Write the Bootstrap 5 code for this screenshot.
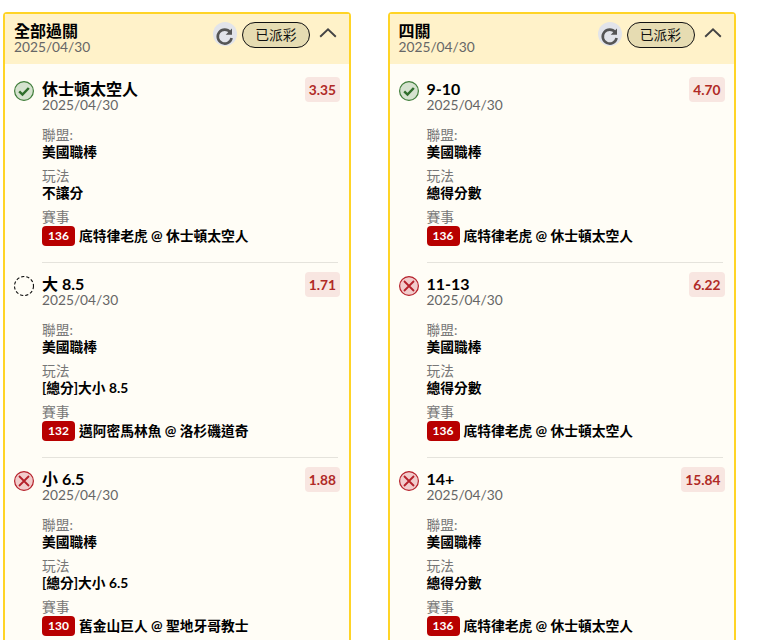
<!DOCTYPE html>
<html lang="zh-Hant">
<head>
<meta charset="utf-8">
<title>過關</title>
<link href="https://cdn.jsdelivr.net/npm/bootstrap@5.3.0/dist/css/bootstrap.min.css" rel="stylesheet">
<style>
html, body { height: 640px; overflow: hidden; background: #fff; }
body { font-family: Lato, "Noto Sans CJK TC", sans-serif; color: #000; }
.slip-page { padding: 12px 0 0 3px; gap: 36.5px; }
.slip-card { width: 348px; flex: none; border: 2px solid #ffd426; border-radius: 4px; background: #fffdf6; padding-bottom: 40px; }
.slip-head { height: 50px; background: #fff2c9; padding: 7px 12px 0 9px; }
.slip-title { font-size: 16px; font-weight: 700; line-height: 19px; }
.slip-date { font-size: 13.76px; color: #666; line-height: 14px; }
.slip-refresh { width: 24px; height: 24px; border-radius: 50%; background: #e2e4ea; margin-top: 1px; }
.slip-pill { height: 26px; width: 68px; border: 1px solid #111; border-radius: 13px; background: #e6dcb2; font-size: 13.76px; line-height: 24px; color: #111; margin: 1px 9px 0 5px; }
.slip-item { padding: 9px 9px 0 9px; }
.slip-head + .slip-item { padding-top: 13px; }
.slip-icon { width: 20px; height: 20px; margin-top: 4px; flex: none; }
.slip-body { margin-left: 8px; min-width: 0; }
.slip-name { font-size: 16px; font-weight: 700; line-height: 18px; margin-top: 3px; }
.slip-odds { height: 25px; padding: 0 4px; min-width: 35px; border-radius: 4px; background: #f8e6e1; color: #b02a26; font-size: 13.76px; font-weight: 700; line-height: 25px; text-align: center; }
.slip-label { font-size: 13.76px; line-height: 17px; color: #777; }
.slip-val { font-size: 13.76px; font-weight: 700; line-height: 17px; margin-bottom: 7px; }
.slip-group { margin-top: 14px; margin-left: 28px; }
.slip-rule { margin: 16px 2px 0 28px; border-top: 1px solid #e5e3dc; }
.slip-match { font-size: 13.76px; font-weight: 700; line-height: 20px; margin-top: 1px; }
.slip-num { width: 33px; height: 20px; border-radius: 4px; background: #b80000; color: #fff; font-size: 12px; font-weight: 700; line-height: 20px; text-align: center; margin-right: 4px; flex: none; }
</style>
</head>
<body>
<svg width="0" height="0" class="d-block" aria-hidden="true">
  <symbol id="i-win" viewBox="0 0 20 20"><circle cx="10" cy="10" r="9.4" fill="#d5e2cf" stroke="#3f7d3a" stroke-width="1.2"/><path d="M5.2 10.4l3.3 3.2 6.3-6.6" fill="none" stroke="#2f6e2c" stroke-width="2.5"/></symbol>
  <symbol id="i-lose" viewBox="0 0 20 20"><circle cx="10" cy="10" r="9.4" fill="#f2cccc" stroke="#b5202a" stroke-width="1.2"/><path d="M5 5l10 10M15 5L5 15" fill="none" stroke="#b5202a" stroke-width="1.8"/></symbol>
  <symbol id="i-open" viewBox="0 0 20 20"><circle cx="10" cy="10" r="9.5" fill="none" stroke="#111" stroke-width="1.1" stroke-dasharray="3.2 2"/></symbol>
  <symbol id="i-ref" viewBox="0 0 24 24"><path d="M17.2 8.2A7 7 0 1 0 18.6 14" fill="none" stroke="#555" stroke-width="2.6"/><path d="M19 4.5v6.3h-6.3z" fill="#555"/></symbol>
  <symbol id="i-chev" viewBox="0 0 18 24"><path d="M1.2 15.8L9 8.4l7.8 7.4" fill="none" stroke="#444" stroke-width="1.9"/></symbol>
</svg>
<div class="slip-page d-flex align-items-start">

<div class="slip-card">
  <div class="slip-head d-flex justify-content-between">
    <div><div class="slip-title">全部過關</div><div class="slip-date">2025/04/30</div></div>
    <div class="d-flex align-items-start">
      <div class="slip-refresh"><svg width="24" height="24"><use href="#i-ref"/></svg></div>
      <div class="slip-pill text-center">已派彩</div>
      <svg width="18" height="24"><use href="#i-chev"/></svg>
    </div>
  </div>

  <div class="slip-item">
    <div class="d-flex">
      <svg class="slip-icon"><use href="#i-win"/></svg>
      <div class="slip-body flex-grow-1"><div class="slip-name">休士頓太空人</div><div class="slip-date">2025/04/30</div></div>
      <div class="slip-odds">3.35</div>
    </div>
    <div class="slip-group">
      <div class="slip-label">聯盟:</div><div class="slip-val">美國職棒</div>
      <div class="slip-label">玩法</div><div class="slip-val">不讓分</div>
      <div class="slip-label">賽事</div>
      <div class="slip-match d-flex"><span class="slip-num">136</span>底特律老虎 @ 休士頓太空人</div>
    </div>
    <div class="slip-rule"></div>
  </div>

  <div class="slip-item">
    <div class="d-flex">
      <svg class="slip-icon"><use href="#i-open"/></svg>
      <div class="slip-body flex-grow-1"><div class="slip-name">大 8.5</div><div class="slip-date">2025/04/30</div></div>
      <div class="slip-odds">1.71</div>
    </div>
    <div class="slip-group">
      <div class="slip-label">聯盟:</div><div class="slip-val">美國職棒</div>
      <div class="slip-label">玩法</div><div class="slip-val">[總分]大小 8.5</div>
      <div class="slip-label">賽事</div>
      <div class="slip-match d-flex"><span class="slip-num">132</span>邁阿密馬林魚 @ 洛杉磯道奇</div>
    </div>
    <div class="slip-rule"></div>
  </div>

  <div class="slip-item">
    <div class="d-flex">
      <svg class="slip-icon"><use href="#i-lose"/></svg>
      <div class="slip-body flex-grow-1"><div class="slip-name">小 6.5</div><div class="slip-date">2025/04/30</div></div>
      <div class="slip-odds">1.88</div>
    </div>
    <div class="slip-group">
      <div class="slip-label">聯盟:</div><div class="slip-val">美國職棒</div>
      <div class="slip-label">玩法</div><div class="slip-val">[總分]大小 6.5</div>
      <div class="slip-label">賽事</div>
      <div class="slip-match d-flex"><span class="slip-num">130</span>舊金山巨人 @ 聖地牙哥教士</div>
    </div>
  </div>
</div>

<div class="slip-card">
  <div class="slip-head d-flex justify-content-between">
    <div><div class="slip-title">四關</div><div class="slip-date">2025/04/30</div></div>
    <div class="d-flex align-items-start">
      <div class="slip-refresh"><svg width="24" height="24"><use href="#i-ref"/></svg></div>
      <div class="slip-pill text-center">已派彩</div>
      <svg width="18" height="24"><use href="#i-chev"/></svg>
    </div>
  </div>

  <div class="slip-item">
    <div class="d-flex">
      <svg class="slip-icon"><use href="#i-win"/></svg>
      <div class="slip-body flex-grow-1"><div class="slip-name">9-10</div><div class="slip-date">2025/04/30</div></div>
      <div class="slip-odds">4.70</div>
    </div>
    <div class="slip-group">
      <div class="slip-label">聯盟:</div><div class="slip-val">美國職棒</div>
      <div class="slip-label">玩法</div><div class="slip-val">總得分數</div>
      <div class="slip-label">賽事</div>
      <div class="slip-match d-flex"><span class="slip-num">136</span>底特律老虎 @ 休士頓太空人</div>
    </div>
    <div class="slip-rule"></div>
  </div>

  <div class="slip-item">
    <div class="d-flex">
      <svg class="slip-icon"><use href="#i-lose"/></svg>
      <div class="slip-body flex-grow-1"><div class="slip-name">11-13</div><div class="slip-date">2025/04/30</div></div>
      <div class="slip-odds">6.22</div>
    </div>
    <div class="slip-group">
      <div class="slip-label">聯盟:</div><div class="slip-val">美國職棒</div>
      <div class="slip-label">玩法</div><div class="slip-val">總得分數</div>
      <div class="slip-label">賽事</div>
      <div class="slip-match d-flex"><span class="slip-num">136</span>底特律老虎 @ 休士頓太空人</div>
    </div>
    <div class="slip-rule"></div>
  </div>

  <div class="slip-item">
    <div class="d-flex">
      <svg class="slip-icon"><use href="#i-lose"/></svg>
      <div class="slip-body flex-grow-1"><div class="slip-name">14+</div><div class="slip-date">2025/04/30</div></div>
      <div class="slip-odds">15.84</div>
    </div>
    <div class="slip-group">
      <div class="slip-label">聯盟:</div><div class="slip-val">美國職棒</div>
      <div class="slip-label">玩法</div><div class="slip-val">總得分數</div>
      <div class="slip-label">賽事</div>
      <div class="slip-match d-flex"><span class="slip-num">136</span>底特律老虎 @ 休士頓太空人</div>
    </div>
  </div>
</div>

</div>
<script src="https://cdn.jsdelivr.net/npm/bootstrap@5.3.0/dist/js/bootstrap.bundle.min.js"></script>
</body>
</html>
